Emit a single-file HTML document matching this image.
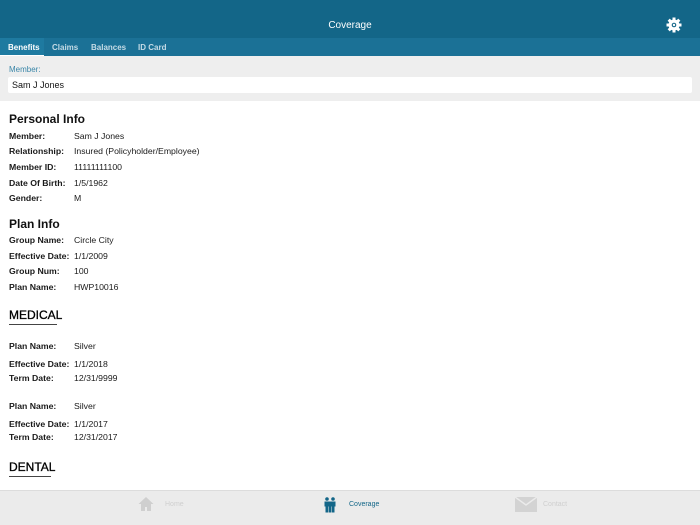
<!DOCTYPE html>
<html><head><meta charset="utf-8"><style>
*{margin:0;padding:0;box-sizing:border-box}
body{width:700px;height:525px;overflow:hidden;background:#fff;font-family:"Liberation Sans",Arial,sans-serif;position:relative;color:#111}
.a{position:absolute;white-space:nowrap}
.l{font-size:8.7px;font-weight:bold;left:9px;color:#1a1a1a}
.v{font-size:8.7px;left:74px;color:#1a1a1a}
.h{font-size:12px;font-weight:bold;left:9px}
.u{position:absolute;left:9px;height:1px;background:#444}
</style></head><body>
<div class="a" style="left:0;top:0;width:700px;height:38px;background:#136688"></div>
<div class="a" style="left:0;top:20px;width:700px;text-align:center;color:#fff;font-size:10px;line-height:12px">Coverage</div>
<svg class="a" style="left:666px;top:17px" width="16" height="16" viewBox="0 0 16 16"><g fill="#fff"><circle cx="8" cy="8" r="5.5"/><rect x="6.5" y="0.5" width="3" height="15"/><rect x="0.5" y="6.5" width="15" height="3"/><rect x="6.5" y="0.5" width="3" height="15" transform="rotate(45 8 8)"/><rect x="6.5" y="0.5" width="3" height="15" transform="rotate(-45 8 8)"/></g><circle cx="8" cy="8" r="2.3" fill="#136688"/><circle cx="8" cy="8" r="1.2" fill="#fff"/></svg>
<div class="a" style="left:0;top:38px;width:700px;height:18px;background:#1b7196"></div>
<div class="a" style="left:0;top:38px;width:44px;height:17px;background:#1e7aa0"></div>
<div class="a" style="left:0;top:55px;width:44px;height:1px;background:#fff"></div>
<div class="a" style="left:8px;top:43px;font-size:8px;font-weight:bold;color:#fff">Benefits</div>
<div class="a" style="left:52px;top:43px;font-size:8px;font-weight:bold;color:#c5dbe6">Claims</div>
<div class="a" style="left:91px;top:43px;font-size:8px;font-weight:bold;color:#c5dbe6">Balances</div>
<div class="a" style="left:138px;top:43px;font-size:8px;font-weight:bold;color:#c5dbe6">ID Card</div>
<div class="a" style="left:0;top:56px;width:700px;height:45px;background:#eeeeee"></div>
<div class="a" style="left:9px;top:65px;font-size:8px;color:#3a86a8">Member:</div>
<div class="a" style="left:8px;top:77px;width:684px;height:16px;background:#fff;border-radius:2px"></div>
<div class="a" style="left:12px;top:80px;font-size:9px">Sam J Jones</div>

<div class="a h" style="top:112px">Personal Info</div>
<div class="a l" style="top:131px">Member:</div><div class="a v" style="top:131px">Sam J Jones</div>
<div class="a l" style="top:146px">Relationship:</div><div class="a v" style="top:146px">Insured (Policyholder/Employee)</div>
<div class="a l" style="top:162px">Member ID:</div><div class="a v" style="top:162px">11111111100</div>
<div class="a l" style="top:178px">Date Of Birth:</div><div class="a v" style="top:178px">1/5/1962</div>
<div class="a l" style="top:193px">Gender:</div><div class="a v" style="top:193px">M</div>

<div class="a h" style="top:217px">Plan Info</div>
<div class="a l" style="top:235px">Group Name:</div><div class="a v" style="top:235px">Circle City</div>
<div class="a l" style="top:251px">Effective Date:</div><div class="a v" style="top:251px">1/1/2009</div>
<div class="a l" style="top:266px">Group Num:</div><div class="a v" style="top:266px">100</div>
<div class="a l" style="top:282px">Plan Name:</div><div class="a v" style="top:282px">HWP10016</div>

<div class="a h" style="top:308px;font-weight:normal;font-size:12px;color:#000;-webkit-text-stroke:0.3px #000">MEDICAL</div>
<div class="u" style="top:324px;width:48px"></div>
<div class="a l" style="top:341px">Plan Name:</div><div class="a v" style="top:341px">Silver</div>
<div class="a l" style="top:359px">Effective Date:</div><div class="a v" style="top:359px">1/1/2018</div>
<div class="a l" style="top:373px">Term Date:</div><div class="a v" style="top:373px">12/31/9999</div>
<div class="a l" style="top:401px">Plan Name:</div><div class="a v" style="top:401px">Silver</div>
<div class="a l" style="top:419px">Effective Date:</div><div class="a v" style="top:419px">1/1/2017</div>
<div class="a l" style="top:432px">Term Date:</div><div class="a v" style="top:432px">12/31/2017</div>

<div class="a h" style="top:460px;font-weight:normal;color:#000;-webkit-text-stroke:0.3px #000">DENTAL</div>
<div class="u" style="top:476px;width:42px"></div>

<div class="a" style="left:0;top:490px;width:700px;height:35px;background:#ebebeb;border-top:1px solid #dcdcdc"></div>
<svg class="a" style="left:138px;top:496px" width="16" height="16" viewBox="0 0 16 16"><path d="M8 1L0.5 8H3v7h4v-4h2v4h4V8h2.5z" fill="#cfcfcf"/></svg>
<div class="a" style="left:165px;top:501px;font-size:7px;color:#cfcfcf">Home</div>
<svg class="a" style="left:324px;top:497px" width="12" height="16" viewBox="0 0 12 16"><g fill="#136688"><circle cx="3" cy="2" r="1.8"/><circle cx="9" cy="2" r="1.8"/><path d="M0.5 4.5h11v5h-1v6h-2.5v-6h-0.5v6h-3v-6h-0.5v6H1.5v-6h-1z"/></g></svg>
<div class="a" style="left:349px;top:501px;font-size:7px;color:#136688">Coverage</div>
<svg class="a" style="left:515px;top:497px" width="22" height="15" viewBox="0 0 22 15"><rect width="22" height="15" fill="#d3d3d3"/><path d="M0 0l11 8 11-8" fill="none" stroke="#ebebeb" stroke-width="1.5"/></svg>
<div class="a" style="left:543px;top:501px;font-size:7px;color:#cfcfcf">Contact</div>
</body></html>
